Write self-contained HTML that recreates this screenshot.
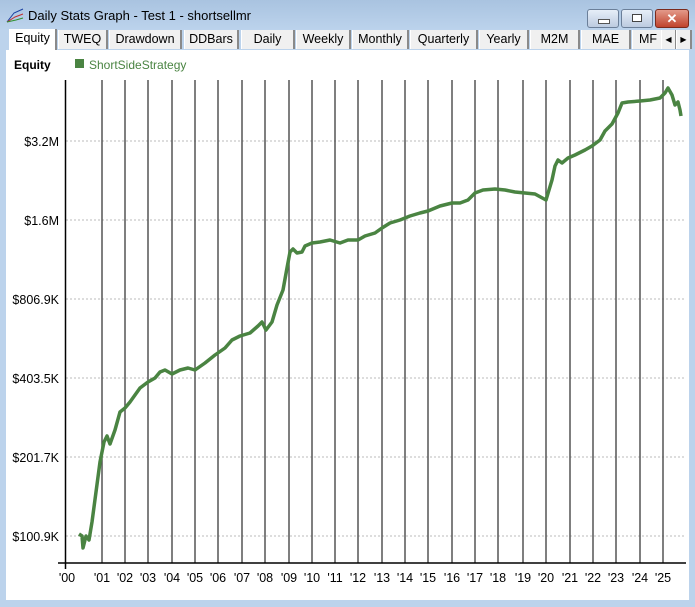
<!DOCTYPE html>
<html><head><style>
body{margin:0;width:695px;height:607px;background:#bcd3ec;font-family:"Liberation Sans",sans-serif;overflow:hidden;position:relative}
.title{position:absolute;left:0;top:0;width:695px;height:30px;background:linear-gradient(#a9c3e0,#bcd3ec)}
.title span{position:absolute;left:28px;top:8px;font-size:13px;color:#000}
.btn{position:absolute;top:9px;height:17px;border:1px solid #6b7f99;border-radius:3px;background:linear-gradient(#e6eef8,#bccbe0)}
.tabs{position:absolute;left:6px;top:29px;width:684px;height:21px;background:#bcd3ec}
.tab{position:absolute;top:1px;height:19px;background:#f0f0f0;border-right:2px solid #8a8a8a;border-left:1px solid #fff;line-height:19px;text-align:center;color:#000;font-family:"Liberation Sans",sans-serif;font-size:12.5px}
.content{position:absolute;left:6px;top:50px;width:683px;height:550px;background:#fff}
</style></head><body>
<div class="title"><svg style="position:absolute;left:6px;top:7px" width="18" height="16"><path d="M1 15 L8 6 L17 2" stroke="#1a3fa0" fill="none"/><path d="M1 15 L9 10 L17 7" stroke="#c03030" fill="none"/><path d="M1 15 L10 13 L17 11" stroke="#309030" fill="none"/></svg><span>Daily Stats Graph - Test 1 - shortsellmr</span>
<div class="btn" style="left:587px;width:30px"><div style="position:absolute;left:10px;top:9px;width:10px;height:3px;background:#fff;border:1px solid #555"></div></div>
<div class="btn" style="left:621px;width:30px"><div style="position:absolute;left:10px;top:4px;width:8px;height:6px;border:1px solid #444;background:#fff"></div></div>
<div class="btn" style="left:655px;width:32px;background:linear-gradient(#e39a8a,#c0432d);border-color:#7b2a1c;color:#fff;font-weight:bold;text-align:center;font-size:13px;line-height:17px">✕</div>
</div>
<div class="tabs">
<div class="tab" style="left:3px;width:45px;top:0;height:21px;background:#fff">Equity</div>
<div class="tab" style="left:52px;width:47px">TWEQ</div>
<div class="tab" style="left:103px;width:70px">Drawdown</div>
<div class="tab" style="left:178px;width:52px">DDBars</div>
<div class="tab" style="left:235px;width:51px">Daily</div>
<div class="tab" style="left:290px;width:52px">Weekly</div>
<div class="tab" style="left:346px;width:54px">Monthly</div>
<div class="tab" style="left:404px;width:65px">Quarterly</div>
<div class="tab" style="left:473px;width:47px">Yearly</div>
<div class="tab" style="left:524px;width:47px">M2M</div>
<div class="tab" style="left:575px;width:47px">MAE</div>
<div class="tab" style="left:626px;width:30px;text-align:left;padding-left:6px">MF</div>
<div class="tab" style="left:655px;width:13px;font-size:8px">◀</div>
<div class="tab" style="left:670px;width:13px;font-size:8px">▶</div>
</div>
<div class="content"></div>
<svg style="position:absolute;left:0;top:0" width="695" height="607" font-family="Liberation Sans,sans-serif" font-size="12.5">
<text x="14" y="69" font-weight="bold" font-size="12" fill="#000">Equity</text>
<rect x="75" y="59" width="9" height="9" fill="#4a8442"/>
<text x="89" y="69" fill="#4a8442" font-size="12">ShortSideStrategy</text>
<g stroke="#bbb" stroke-dasharray="2,2"><line x1="66" x2="686" y1="141" y2="141"/><line x1="66" x2="686" y1="220" y2="220"/><line x1="66" x2="686" y1="299" y2="299"/><line x1="66" x2="686" y1="378" y2="378"/><line x1="66" x2="686" y1="457" y2="457"/><line x1="66" x2="686" y1="536" y2="536"/></g>
<g stroke="#555" stroke-width="1.5">
<line x1="102" x2="102" y1="80" y2="563"/><line x1="125" x2="125" y1="80" y2="563"/><line x1="148" x2="148" y1="80" y2="563"/><line x1="172" x2="172" y1="80" y2="563"/><line x1="195" x2="195" y1="80" y2="563"/><line x1="218" x2="218" y1="80" y2="563"/><line x1="242" x2="242" y1="80" y2="563"/><line x1="265" x2="265" y1="80" y2="563"/><line x1="289" x2="289" y1="80" y2="563"/><line x1="312" x2="312" y1="80" y2="563"/><line x1="335" x2="335" y1="80" y2="563"/><line x1="358" x2="358" y1="80" y2="563"/><line x1="382" x2="382" y1="80" y2="563"/><line x1="405" x2="405" y1="80" y2="563"/><line x1="428" x2="428" y1="80" y2="563"/><line x1="452" x2="452" y1="80" y2="563"/><line x1="475" x2="475" y1="80" y2="563"/><line x1="498" x2="498" y1="80" y2="563"/><line x1="523" x2="523" y1="80" y2="563"/><line x1="546" x2="546" y1="80" y2="563"/><line x1="570" x2="570" y1="80" y2="563"/><line x1="593" x2="593" y1="80" y2="563"/><line x1="616" x2="616" y1="80" y2="563"/><line x1="640" x2="640" y1="80" y2="563"/><line x1="663" x2="663" y1="80" y2="563"/>
</g>
<g stroke="#000" stroke-width="1.5"><line x1="65.5" x2="65.5" y1="80" y2="569"/><line x1="58" x2="686" y1="563" y2="563"/></g>
<g text-anchor="end" fill="#000"><text x="59" y="146">$3.2M</text><text x="59" y="225">$1.6M</text><text x="59" y="304">$806.9K</text><text x="59" y="383">$403.5K</text><text x="59" y="462">$201.7K</text><text x="59" y="541">$100.9K</text></g>
<g text-anchor="middle" fill="#000"><text x="67" y="582">'00</text><text x="102" y="582">'01</text><text x="125" y="582">'02</text><text x="148" y="582">'03</text><text x="172" y="582">'04</text><text x="195" y="582">'05</text><text x="218" y="582">'06</text><text x="242" y="582">'07</text><text x="265" y="582">'08</text><text x="289" y="582">'09</text><text x="312" y="582">'10</text><text x="335" y="582">'11</text><text x="358" y="582">'12</text><text x="382" y="582">'13</text><text x="405" y="582">'14</text><text x="428" y="582">'15</text><text x="452" y="582">'16</text><text x="475" y="582">'17</text><text x="498" y="582">'18</text><text x="523" y="582">'19</text><text x="546" y="582">'20</text><text x="570" y="582">'21</text><text x="593" y="582">'22</text><text x="616" y="582">'23</text><text x="640" y="582">'24</text><text x="663" y="582">'25</text></g>
<polyline fill="none" stroke="#4a8442" stroke-width="3.5" stroke-linejoin="round" points="79,534 82,536 83,548 86,536 89,540 92,522 96,492 100,462 104,442 107,436 110,444 115,430 120,412 125,408 130,402 140,388 148,382 155,378 160,372 165,370 172,374 180,370 188,368 195,370 205,363 215,355 225,348 232,340 240,336 250,333 258,326 262,322 266,330 272,322 277,305 283,290 287,268 290,252 293,249 297,253 302,252 305,246 312,243 320,242 330,240 340,243 348,240 358,240 365,236 375,233 382,228 390,223 400,220 410,216 420,213 428,211 440,206 452,203 460,203 468,200 475,193 483,190 495,189 505,190 515,192 525,193 535,194 546,200 549,190 552,180 555,166 558,160 562,163 568,158 575,155 585,150 592,146 600,140 605,131 612,124 618,113 622,103 628,102 640,101 650,100 660,98 665,93 668,88 672,95 675,105 678,102 680,110 681,116"/>
</svg>
</body></html>
